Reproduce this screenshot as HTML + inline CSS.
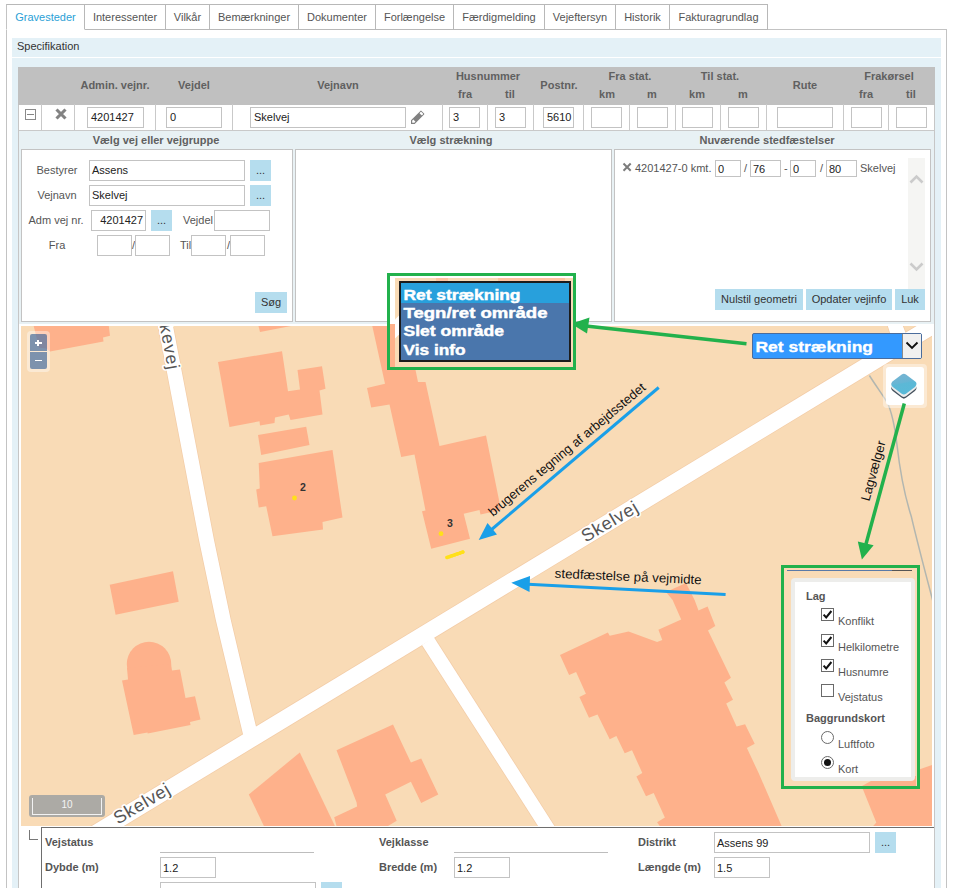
<!DOCTYPE html>
<html><head><meta charset="utf-8">
<style>
*{box-sizing:border-box;margin:0;padding:0}
html,body{width:961px;height:888px;overflow:hidden;background:#fff}
body{position:relative;font-family:"Liberation Sans",sans-serif;font-size:11px;color:#444}
.a{position:absolute}
.tab{position:absolute;top:4px;height:26px;border:1px solid #b8b8b8;border-left:none;line-height:25px;text-align:center;color:#555;font-size:11px;background:#fff}
.inp{position:absolute;border:1px solid #c3c3c3;background:#fff;font-size:11px;color:#222;padding-left:3px;white-space:nowrap;overflow:hidden}
.btn{position:absolute;background:#b5ddee;color:#333;text-align:center;font-size:11px;white-space:nowrap}
.hd{position:absolute;font-weight:bold;color:#606060;font-size:11px;text-align:center;white-space:nowrap;width:100px;margin-left:-50px;height:14px;line-height:14px;margin-top:-7px}
.lbl{position:absolute;color:#555;font-size:11px;white-space:nowrap;height:14px;line-height:14px}
.vl{position:absolute;width:1px;background:#c9c9c9}
.hl{position:absolute;height:1px;background:#c9c9c9}
.bl{position:absolute;font-weight:bold;color:#555;font-size:11px;white-space:nowrap;height:14px;line-height:14px}
.box{position:absolute;border:1px solid #c3c3c3;background:#fff}
</style></head><body>
<!-- outer panel border -->
<div class="a" style="left:6px;top:29px;width:941px;height:870px;border:1px solid #c3c3c3;"></div>
<!-- tabs -->
<div class="tab" style="left:6px;width:79px;border-left:1px solid #c3c3c3;border-bottom:1px solid #fff;color:#2a9fd6">Gravesteder</div>
<div class="tab" style="left:85px;width:81px">Interessenter</div>
<div class="tab" style="left:166px;width:44px">Vilkår</div>
<div class="tab" style="left:210px;width:89px">Bemærkninger</div>
<div class="tab" style="left:299px;width:77px">Dokumenter</div>
<div class="tab" style="left:376px;width:78px">Forlængelse</div>
<div class="tab" style="left:454px;width:91px">Færdigmelding</div>
<div class="tab" style="left:545px;width:71px">Vejeftersyn</div>
<div class="tab" style="left:616px;width:54px">Historik</div>
<div class="tab" style="left:670px;width:98px">Fakturagrundlag</div>
<!-- specification bar -->
<div class="a" style="left:12px;top:38px;width:929px;height:19px;background:#e4f1f7"></div>
<div class="a" style="left:17px;top:37px;line-height:19px;color:#333;font-size:11px">Specifikation</div>
<!-- light blue panel -->
<div class="a" style="left:12px;top:58px;width:929px;height:840px;background:#e4f1f7"></div>
<!-- grid white bg -->
<div class="a" style="left:18px;top:67px;width:917px;height:830px;background:#fff;border-left:1px solid #c6c6c6;border-right:1px solid #c6c6c6"></div>
<!-- gray header -->
<div class="a" style="left:18px;top:67px;width:917px;height:38px;background:#c0c0c0"></div>
<div class="hd" style="left:115px;top:85px">Admin. vejnr.</div>
<div class="hd" style="left:194px;top:85px">Vejdel</div>
<div class="hd" style="left:338px;top:85px">Vejnavn</div>
<div class="hd" style="left:488px;top:76px">Husnummer</div>
<div class="hd" style="left:465px;top:94px">fra</div>
<div class="hd" style="left:510px;top:94px">til</div>
<div class="hd" style="left:559px;top:85px">Postnr.</div>
<div class="hd" style="left:630px;top:76px">Fra stat.</div>
<div class="hd" style="left:607px;top:94px">km</div>
<div class="hd" style="left:652px;top:94px">m</div>
<div class="hd" style="left:720px;top:76px">Til stat.</div>
<div class="hd" style="left:697px;top:94px">km</div>
<div class="hd" style="left:743px;top:94px">m</div>
<div class="hd" style="left:805px;top:85px">Rute</div>
<div class="hd" style="left:889px;top:76px">Frakørsel</div>
<div class="hd" style="left:866px;top:94px">fra</div>
<div class="hd" style="left:911px;top:94px">til</div>
<!-- row -->
<div class="hl" style="left:19px;top:130px;width:915px"></div>
<div class="vl" style="left:41px;top:104px;height:26px"></div>
<div class="vl" style="left:74px;top:104px;height:26px"></div>
<div class="vl" style="left:155px;top:104px;height:26px"></div>
<div class="vl" style="left:232px;top:104px;height:26px"></div>
<div class="vl" style="left:442px;top:104px;height:26px"></div>
<div class="vl" style="left:487px;top:104px;height:26px"></div>
<div class="vl" style="left:533px;top:104px;height:26px"></div>
<div class="vl" style="left:583px;top:104px;height:26px"></div>
<div class="vl" style="left:629px;top:104px;height:26px"></div>
<div class="vl" style="left:675px;top:104px;height:26px"></div>
<div class="vl" style="left:720px;top:104px;height:26px"></div>
<div class="vl" style="left:766px;top:104px;height:26px"></div>
<div class="vl" style="left:843px;top:104px;height:26px"></div>
<div class="vl" style="left:888px;top:104px;height:26px"></div>
<!-- minus icon -->
<div class="a" style="left:25px;top:109px;width:11px;height:11px;border:1px solid #8a8a8a;background:#fff"></div>
<div class="a" style="left:27px;top:114px;width:7px;height:1px;background:#858585"></div>
<!-- X icon -->
<svg class="a" style="left:54.1px;top:107.1px" width="14" height="14" viewBox="0 0 14 14"><path d="M2.5 2.5 L11.5 11.5 M11.5 2.5 L2.5 11.5" stroke="#838383" stroke-width="3.1" fill="none"/></svg>
<div class="inp" style="left:87px;top:107px;width:57px;height:21px;line-height:19px">4201427</div>
<div class="inp" style="left:166px;top:107px;width:56px;height:21px;line-height:19px">0</div>
<div class="inp" style="left:250px;top:107px;width:156px;height:21px;line-height:19px">Skelvej</div>
<!-- pencil -->
<svg class="a" style="left:409px;top:109px;overflow:visible" width="18" height="18" viewBox="-2 -2 18 18"><g transform="translate(1.85,11.15) rotate(-45)"><path d="M-2.6,0 L0,-2.6 L13.3,-2.6 Q14.1,-2.6 14.1,-1.8 L14.1,1.8 Q14.1,2.6 13.3,2.6 L0,2.6 Z" fill="#818181"/><rect x="11" y="-1.65" width="2.2" height="3.3" rx="0.6" fill="#fff"/><path d="M-0.9,0 L0.5,-1.5 L2.2,-1.5 L2.2,1.5 L0.5,1.5 Z" fill="#fff"/></g></svg>
<div class="inp" style="left:449px;top:107px;width:31px;height:21px;line-height:19px">3</div>
<div class="inp" style="left:495px;top:107px;width:31px;height:21px;line-height:19px">3</div>
<div class="inp" style="left:543px;top:107px;width:31px;height:21px;line-height:19px;padding-left:3px">5610</div>
<div class="inp" style="left:591px;top:107px;width:31px;height:21px"></div>
<div class="inp" style="left:637px;top:107px;width:31px;height:21px"></div>
<div class="inp" style="left:682px;top:107px;width:31px;height:21px"></div>
<div class="inp" style="left:728px;top:107px;width:31px;height:21px"></div>
<div class="inp" style="left:777px;top:107px;width:56px;height:21px"></div>
<div class="inp" style="left:851px;top:107px;width:31px;height:21px"></div>
<div class="inp" style="left:896px;top:107px;width:31px;height:21px"></div>

<!-- sub panel -->
<div class="a" style="left:19px;top:131px;width:915px;height:193px;background:#e8f1f4"></div>
<div class="hd" style="left:156px;top:140px;width:200px;margin-left:-100px">Vælg vej eller vejgruppe</div>
<div class="hd" style="left:451px;top:140px;width:200px;margin-left:-100px">Vælg strækning</div>
<div class="hd" style="left:767px;top:140px;width:200px;margin-left:-100px">Nuværende stedfæstelser</div>
<div class="box" style="left:21px;top:149px;width:272px;height:173px"></div>
<div class="box" style="left:295px;top:149px;width:317px;height:173px"></div>
<div class="box" style="left:614px;top:149px;width:317px;height:173px"></div>
<!-- left box content -->
<div class="lbl" style="left:27px;width:60px;text-align:center;top:163px">Bestyrer</div>
<div class="inp" style="left:89px;top:160px;width:156px;height:21px;line-height:19px;padding-left:2px">Assens</div>
<div class="btn" style="left:250px;top:160px;width:21px;height:21px;line-height:21px">...</div>
<div class="lbl" style="left:27px;width:60px;text-align:center;top:188px">Vejnavn</div>
<div class="inp" style="left:89px;top:185px;width:156px;height:21px;line-height:19px;padding-left:2px">Skelvej</div>
<div class="btn" style="left:250px;top:185px;width:21px;height:21px;line-height:21px">...</div>
<div class="lbl" style="left:26px;width:60px;text-align:center;top:213px">Adm vej nr.</div>
<div class="inp" style="left:91px;top:210px;width:55px;height:21px;line-height:19px;text-align:right;padding-right:2px;padding-left:0">4201427</div>
<div class="btn" style="left:151px;top:210px;width:21px;height:21px;line-height:21px">...</div>
<div class="lbl" style="left:183px;top:213px">Vejdel</div>
<div class="inp" style="left:214px;top:210px;width:56px;height:21px"></div>
<div class="lbl" style="left:27px;width:60px;text-align:center;top:238px">Fra</div>
<div class="inp" style="left:97px;top:235px;width:35px;height:21px"></div>
<div class="lbl" style="left:132px;top:238px">/</div>
<div class="inp" style="left:135px;top:235px;width:35px;height:21px"></div>
<div class="lbl" style="left:180px;top:238px">Til</div>
<div class="inp" style="left:191px;top:235px;width:35px;height:21px"></div>
<div class="lbl" style="left:227px;top:238px">/</div>
<div class="inp" style="left:230px;top:235px;width:35px;height:21px"></div>
<div class="btn" style="left:255px;top:292px;width:32px;height:21px;line-height:21px">Søg</div>
<!-- right box content -->
<svg class="a" style="left:622px;top:162px" width="10" height="10" viewBox="0 0 10 10"><path d="M1.5 1.5 L8.7 8.7 M8.7 1.5 L1.5 8.7" stroke="#7c7c7c" stroke-width="2" fill="none"/></svg>
<div class="lbl" style="left:635px;top:161px">4201427-0 kmt.</div>
<div class="inp" style="left:715px;top:160px;width:26px;height:17px;line-height:16px;padding-left:2px">0</div>
<div class="lbl" style="left:744px;top:161px">/</div>
<div class="inp" style="left:750px;top:160px;width:31px;height:17px;line-height:16px;padding-left:2px">76</div>
<div class="lbl" style="left:784px;top:161px">-</div>
<div class="inp" style="left:790px;top:160px;width:26px;height:17px;line-height:16px;padding-left:2px">0</div>
<div class="lbl" style="left:820px;top:161px">/</div>
<div class="inp" style="left:826px;top:160px;width:31px;height:17px;line-height:16px;padding-left:2px">80</div>
<div class="lbl" style="left:860px;top:161px">Skelvej</div>
<!-- scrollbar -->
<div class="a" style="left:908px;top:158px;width:17px;height:131px;background:#f5f5f3"></div>
<svg class="a" style="left:909px;top:174px" width="15" height="10" viewBox="0 0 15 10"><path d="M1.5 8.5 L7.5 2.5 L13.5 8.5" stroke="#cbcbcb" stroke-width="2.6" fill="none"/></svg>
<svg class="a" style="left:909px;top:262px" width="15" height="10" viewBox="0 0 15 10"><path d="M1.5 1.5 L7.5 7.5 L13.5 1.5" stroke="#cbcbcb" stroke-width="2.6" fill="none"/></svg>
<div class="btn" style="left:715px;top:289px;width:88px;height:21px;line-height:21px">Nulstil geometri</div>
<div class="btn" style="left:806px;top:289px;width:86px;height:21px;line-height:21px">Opdater vejinfo</div>
<div class="btn" style="left:895px;top:289px;width:30px;height:21px;line-height:21px">Luk</div>

<!-- MAP -->
<svg class="a" style="left:21px;top:326px" width="911" height="500" viewBox="21 326 911 500">
<rect x="21" y="326" width="911" height="500" fill="#f9dbb6"/>
<g fill="#feb18b">
<!-- top-left building -->
<polygon points="33.7,326 108.8,326 110,335.8 103,337.5 103.5,341.5 50,351.5 46,348.6 39,347.8"/>
<!-- top fragment -->
<polygon points="258.5,326 291,326 260,332"/>
<!-- A -->
<polygon points="218,362 282,351.2 288,391.2 300,389.5 297.5,370 322,366.2 325.5,388.7 319.5,390.5 322.5,414.5 290.5,420 288.7,414.5 275,417.5 274.5,423 260,425.5 259.5,421.2 229.5,427"/>
<!-- B -->
<polygon points="258,435 306.2,426.7 309.5,445 261.2,455"/>
<!-- C -->
<polygon points="258.7,463 332.5,450 342.5,517.5 322.5,522 323,529.5 272.5,536.2 266.2,506.2 258.7,507.5 256.2,489.5 259.8,488.6"/>
<!-- D long building -->
<polygon points="372.3,326 407,326 415,367.5 418,382 425.5,382 439.5,446 486,435.5 501,510 480.5,514.5 479.5,510 463.7,513.7 470,538.7 431.2,548.7 422,511.2 425.5,510.5 414.5,454.5 401.2,457 389.5,404.5 371.2,407.5 367,388 385,383.7"/>
<!-- small rect -->
<polygon points="109.7,584.7 173,571.2 178.7,601.8 115.6,614.7"/>
<!-- E dome -->
<circle cx="149" cy="664" r="22.2"/>
<polygon points="127,668 128,679.5 122,680.5 133.7,735 147.5,732.5 147.7,733.5 190.5,725 190,722 200.5,719.5 195,696.2 185.5,698 180,669.5 172,670.5 171,664"/>
<!-- H -->
<polygon points="248.8,794.4 299.8,752.5 334.9,826 263.9,826"/>
<!-- I -->
<polygon points="336.5,750.2 393,724.6 410.9,762.4 421.2,758.5 438.3,794.4 421.2,802.9 410.9,781.8 385.2,794.4 396.7,820.7 388,826 336.5,826 334.2,817.3 357.1,806.5 356.6,802.4"/>
<!-- G -->
<polygon points="672.6,600 694.6,600 698.5,610.4 707.6,606.5 715.3,625.9 708,630.6 730.9,677.7 724.4,682.4 733,699.7 726.2,703.6 736.6,726.4 745.1,724.3 754.7,743.7 746.9,748.1 758.5,772.8 781.6,826 659.7,826 657.1,822.2 664.9,817.6 653.7,793 646,796.3 636.4,776.6 642.3,773 632,750.2 624.7,753.3 616.4,736 609.7,739.3 597.5,714.5 589,717.8 579.4,697.1 585.9,693.8 576.1,672 569.1,675.1 560,654.9 607.9,632.4 609.7,635.7 628.6,631.6 657.1,642 662.3,640.1 658.4,629.8 681.2,619.4"/>
<!-- G upper narrow part (connects up to label area) -->
<polygon points="672.6,600 694.6,600 686,583 666,592"/>
<!-- J -->
<polygon points="862.8,789 932,765 932,826 873.2,826 876.3,822.4"/>
</g>
<!-- roads -->
<g fill="none" stroke="#f3cda8" stroke-width="1.5" stroke-linejoin="round">
<polygon points="158,325 172.8,325 214,540 230.8,620 256.2,727.5 243.2,735 215.8,620 199,540"/>
<polygon points="422,645 433.7,637 555,827 538.7,827"/>
<polygon points="887.5,325 902.5,325 906,334 893,342"/>
<polygon points="91,826.5 123,826.5 933,335.2 933,325 918.3,325"/>
</g>
<g fill="#ffffff">
<polygon points="158,325 172.8,325 214,540 230.8,620 256.2,727.5 243.2,735 215.8,620 199,540"/>
<polygon points="422,645 433.7,637 555,827 538.7,827"/>
<polygon points="887.5,325 902.5,325 906,334 893,342"/>
<polygon points="91,826.5 123,826.5 933,335.2 933,325 918.3,325"/>
</g>
<!-- thin grey boundary line -->
<path d="M869.4,375.5 C876,386 882,394 887,402 C892,412 895,428 897,445 C901,480 906,500 911.4,516.8 C918,545 926,575 932.6,600 L936,616" fill="none" stroke="#b2b6b0" stroke-width="1.5"/>
<!-- road labels -->
<g font-family="Liberation Sans, sans-serif" fill="#565656" stroke="#ffffff" stroke-width="3" paint-order="stroke" stroke-linejoin="round">
<text transform="translate(159.6,325.3) rotate(79.5)" font-size="17.5" text-anchor="start" letter-spacing="1.15">kevej</text>
<text transform="translate(145,808.7) rotate(-30.5)" font-size="18" text-anchor="middle" letter-spacing="0.7">Skelvej</text>
<text transform="translate(612.9,526.7) rotate(-30.5)" font-size="18" text-anchor="middle" letter-spacing="0.7">Skelvej</text>
</g>
<!-- house numbers -->
<circle cx="294.5" cy="498" r="2.4" fill="#ffe01a"/>
<circle cx="441" cy="533.7" r="2.4" fill="#ffe01a"/>
<text x="300" y="491" font-size="10.5" font-weight="bold" fill="#333" font-family="Liberation Sans, sans-serif">2</text>
<text x="447" y="526.5" font-size="10.5" font-weight="bold" fill="#333" font-family="Liberation Sans, sans-serif">3</text>
<!-- yellow drawing -->
<path d="M447,557.5 L463,552" stroke="#ffe01a" stroke-width="3.6" stroke-linecap="round" stroke-dasharray="0.5 2.2"/>
<path d="M447,557.5 L463,552" stroke="#ffe01a" stroke-width="3" stroke-linecap="round"/>
</svg>

<!-- OVERLAY -->
<!-- zoom control -->
<div class="a" style="left:27px;top:331px;width:23px;height:41px;background:rgba(255,255,255,0.4);border-radius:4px"></div>
<div class="a" style="left:30px;top:334px;width:17px;height:17px;background:rgba(0,60,136,0.5);border-radius:2px 2px 0 0"></div>
<div class="a" style="left:30px;top:352px;width:17px;height:17px;background:rgba(0,60,136,0.5);border-radius:0 0 2px 2px"></div>
<div class="a" style="left:34.6px;top:341.7px;width:7.6px;height:2px;background:#fff"></div>
<div class="a" style="left:37.3px;top:340px;width:2.2px;height:5.6px;background:#fff"></div>
<div class="a" style="left:34.6px;top:359.6px;width:7.6px;height:1.9px;background:#fff"></div>
<!-- scale bar -->
<div class="a" style="left:29px;top:795px;width:76px;height:22px;background:#acaaa5;border-radius:3px"></div>
<div class="a" style="left:32px;top:798px;width:70px;height:17px;border:1px solid #f2f2f2;border-top:none"></div>
<div class="a" style="left:32px;top:798px;width:70px;height:14px;line-height:14px;text-align:center;color:#f4f4f4;font-size:10px">10</div>
<!-- layer switcher button -->
<div class="a" style="left:883px;top:364px;width:44px;height:44px;background:rgba(255,255,255,0.4);border-radius:4px"></div>
<div class="a" style="left:886px;top:367px;width:38px;height:38px;background:#fff;border-radius:3px"></div>
<svg class="a" style="left:889px;top:371px" width="30" height="30" viewBox="0 0 30 30">
<defs><linearGradient id="lg" x1="0" y1="0" x2="0.25" y2="1"><stop offset="0" stop-color="#73b4d2"/><stop offset="0.45" stop-color="#68b5d4"/><stop offset="0.55" stop-color="#5cb8d6"/><stop offset="1" stop-color="#5ab9d7"/></linearGradient></defs>
<g stroke-linejoin="round" stroke-width="7">
<path d="M14.85,10.35 L23.799999999999997,17.20 L14.85,24.05 L5.9,17.20Z" fill="#46525e" stroke="#46525e"/>
<path d="M14.85,8.65 L23.799999999999997,15.50 L14.85,22.35 L5.9,15.50Z" fill="#ececec" stroke="#ececec"/>
<path d="M14.85,6.3 L23.8,13.15 L14.85,20 L5.9,13.15Z" fill="url(#lg)" stroke="url(#lg)"/>
</g>
</svg>
<!-- annotation svg -->
<svg class="a" style="left:0;top:0" width="961" height="888" viewBox="0 0 961 888">
<!-- green arrow select->menu -->
<line x1="746.5" y1="343.7" x2="586" y2="326" stroke="#22b14c" stroke-width="3.5"/>
<polygon points="571.2,323.8 589.5,317.5 587,333.5" fill="#22b14c"/>
<!-- green arrow layer -->
<line x1="904.3" y1="403.5" x2="866" y2="544" stroke="#22b14c" stroke-width="3.5"/>
<polygon points="861.9,559.5 857.8,541.5 873.6,545.3" fill="#22b14c"/>
<!-- blue arrows -->
<line x1="658.7" y1="387.5" x2="491" y2="530" stroke="#1a9fe8" stroke-width="3"/>
<polygon points="478.7,540 487.5,523 497,534.5" fill="#1a9fe8"/>
<line x1="725.6" y1="594.6" x2="528" y2="584.3" stroke="#1a9fe8" stroke-width="3"/>
<polygon points="511.3,582.7 530,576 529.5,592" fill="#1a9fe8"/>
<g font-family="Liberation Sans, sans-serif" fill="#111" font-size="13">
<text transform="translate(569.8,452.9) rotate(-39.8)" text-anchor="middle" textLength="200" lengthAdjust="spacingAndGlyphs">brugerens tegning af arbejdsstedet</text>
<text transform="translate(628,581) rotate(2.5)" text-anchor="middle" textLength="147" lengthAdjust="spacingAndGlyphs">stedfæstelse på vejmidte</text>
<text transform="translate(877.5,472) rotate(-74.5)" text-anchor="middle" textLength="62" lengthAdjust="spacingAndGlyphs">Lagvælger</text>
</g>
</svg>
<!-- menu green rect + content -->
<div class="a" style="left:387px;top:273px;width:189px;height:97px;border:3px solid #22b14c;background:#f9dbb6"></div>
<div class="a" style="left:390px;top:276px;width:5px;height:48px;background:#fff"></div>
<div class="a" style="left:390px;top:276px;width:183px;height:2px;background:#fff"></div>
<div class="a" style="left:390px;top:324px;width:5px;height:43px;background:#feb18b"></div>
<div class="a" style="left:436px;top:278px;width:12px;height:3px;background:#fdc3a0"></div>
<div class="a" style="left:498px;top:278px;width:67px;height:3px;background:#fdc3a0"></div>
<svg class="a" style="left:395px;top:310px" width="4" height="30" viewBox="395 310 4 30"><polygon points="395,319.5 399,315.5 399,334.5 395,338.5" fill="#fff"/></svg>
<div class="a" style="left:399px;top:281px;width:172px;height:81px;background:#4a76ac;border:2px solid #1c1c1c"></div>
<div class="a" style="left:401px;top:283px;width:168px;height:20px;background:#28a0dc"></div>
<svg class="a" style="left:401px;top:283px" width="168" height="77" viewBox="0 0 168 77" font-family="Liberation Sans, sans-serif" font-weight="bold" font-size="14.5" fill="#fff" stroke="#fff" stroke-width="0.45">
<text x="2.5" y="17" textLength="117" lengthAdjust="spacingAndGlyphs">Ret strækning</text>
<text x="2.5" y="35" textLength="144" lengthAdjust="spacingAndGlyphs">Tegn/ret område</text>
<text x="2.5" y="53" textLength="100.5" lengthAdjust="spacingAndGlyphs">Slet område</text>
<text x="2.5" y="71.5" textLength="62" lengthAdjust="spacingAndGlyphs">Vis info</text>
</svg>
<!-- select -->
<div class="a" style="left:752px;top:333px;width:170px;height:26px;background:#3399ff;border:1px solid #4a6c9c;border-radius:2px"></div>
<div class="a" style="left:902px;top:334px;width:19px;height:24px;background:#f0f0f0;border-left:1px solid #8a8a8a"></div>
<svg class="a" style="left:905px;top:340px" width="14" height="11" viewBox="0 0 14 11"><path d="M1.5 2.5 L7 8 L12.5 2.5" stroke="#111" stroke-width="1.9" fill="none"/></svg>
<svg class="a" style="left:753px;top:334px" width="148" height="24" viewBox="0 0 148 24" font-family="Liberation Sans, sans-serif" font-weight="bold" font-size="15.5" fill="#fff" stroke="#fff" stroke-width="0.35">
<text x="2.5" y="17.7" textLength="117.5" lengthAdjust="spacingAndGlyphs">Ret strækning</text>
</svg>
<!-- layers panel -->
<div class="a" style="left:781px;top:565px;width:139px;height:224px;border:3px solid #22b14c;background:#f9dbb6"></div>
<div class="a" style="left:787px;top:570px;width:125px;height:1px;background:#5a7aa8"></div>
<div class="a" style="left:892px;top:570px;width:20px;height:1px;background:#555"></div>
<svg class="a" style="left:784px;top:776px" width="132" height="10" viewBox="784 776 132 10"><polygon points="862,786 916,786 916,776 880,776" fill="#feb18b"/></svg>
<div class="a" style="left:791px;top:578px;width:124px;height:203px;background:#ededeb;border-radius:4px"></div>
<div class="a" style="left:795px;top:582px;width:116px;height:195px;background:#fff"></div>
<div class="bl" style="left:806px;top:589px">Lag</div>
<div class="bl" style="left:806px;top:711px">Baggrundskort</div>
<div class="lbl" style="left:838px;top:614px">Konflikt</div>
<div class="lbl" style="left:838px;top:640px">Helkilometre</div>
<div class="lbl" style="left:838px;top:665px">Husnumre</div>
<div class="lbl" style="left:838px;top:690px">Vejstatus</div>
<div class="lbl" style="left:838px;top:737px">Luftfoto</div>
<div class="lbl" style="left:838px;top:762px">Kort</div>
<div class="a" style="left:821px;top:608px;width:13px;height:13px;border:1px solid #6a6a6a;background:#fff"></div>
<div class="a" style="left:821px;top:634px;width:13px;height:13px;border:1px solid #6a6a6a;background:#fff"></div>
<div class="a" style="left:821px;top:659px;width:13px;height:13px;border:1px solid #6a6a6a;background:#fff"></div>
<div class="a" style="left:821px;top:684px;width:13px;height:13px;border:1px solid #6a6a6a;background:#fff"></div>
<svg class="a" style="left:821px;top:608px" width="13" height="13" viewBox="0 0 13 13"><path d="M2.6 6.6 L5.2 9.4 L10.4 3" stroke="#111" stroke-width="2" fill="none"/></svg>
<svg class="a" style="left:821px;top:634px" width="13" height="13" viewBox="0 0 13 13"><path d="M2.6 6.6 L5.2 9.4 L10.4 3" stroke="#111" stroke-width="2" fill="none"/></svg>
<svg class="a" style="left:821px;top:659px" width="13" height="13" viewBox="0 0 13 13"><path d="M2.6 6.6 L5.2 9.4 L10.4 3" stroke="#111" stroke-width="2" fill="none"/></svg>
<div class="a" style="left:821px;top:731px;width:13px;height:13px;border:1px solid #6a6a6a;background:#fff;border-radius:50%"></div>
<div class="a" style="left:821px;top:756px;width:13px;height:13px;border:1px solid #6a6a6a;background:#fff;border-radius:50%"></div>
<div class="a" style="left:824px;top:759px;width:7px;height:7px;background:#111;border-radius:50%"></div>

<!-- BOTTOM -->
<div class="a" style="left:19px;top:826px;width:915px;height:70px;background:#fff"></div>
<div class="a" style="left:41px;top:827px;width:893px;height:70px;border-top:1px solid #6e6e6e;border-left:1px solid #6e6e6e;background:#fff"></div>
<div class="a" style="left:29px;top:830px;width:9px;height:10px;border-left:1px solid #777;border-bottom:1px solid #777"></div>
<div class="bl" style="left:45px;top:835px">Vejstatus</div>
<div class="bl" style="left:45px;top:860px">Dybde (m)</div>
<div class="hl" style="left:160px;top:852px;width:154px;background:#bdbdbd"></div>
<div class="inp" style="left:160px;top:857px;width:56px;height:21px;line-height:21px;padding-left:2px">1.2</div>
<div class="inp" style="left:160px;top:882px;width:156px;height:21px"></div>
<div class="btn" style="left:321px;top:882px;width:21px;height:21px"></div>
<div class="bl" style="left:379px;top:835px">Vejklasse</div>
<div class="bl" style="left:379px;top:860px">Bredde (m)</div>
<div class="hl" style="left:454px;top:852px;width:154px;background:#bdbdbd"></div>
<div class="inp" style="left:454px;top:857px;width:56px;height:21px;line-height:21px;padding-left:2px">1.2</div>
<div class="bl" style="left:638px;top:835px">Distrikt</div>
<div class="bl" style="left:638px;top:860px">Længde (m)</div>
<div class="inp" style="left:714px;top:832px;width:156px;height:21px;line-height:21px;padding-left:2px">Assens 99</div>
<div class="btn" style="left:875px;top:832px;width:21px;height:21px;line-height:21px">...</div>
<div class="inp" style="left:714px;top:857px;width:56px;height:21px;line-height:21px;padding-left:2px">1.5</div>

</body></html>
